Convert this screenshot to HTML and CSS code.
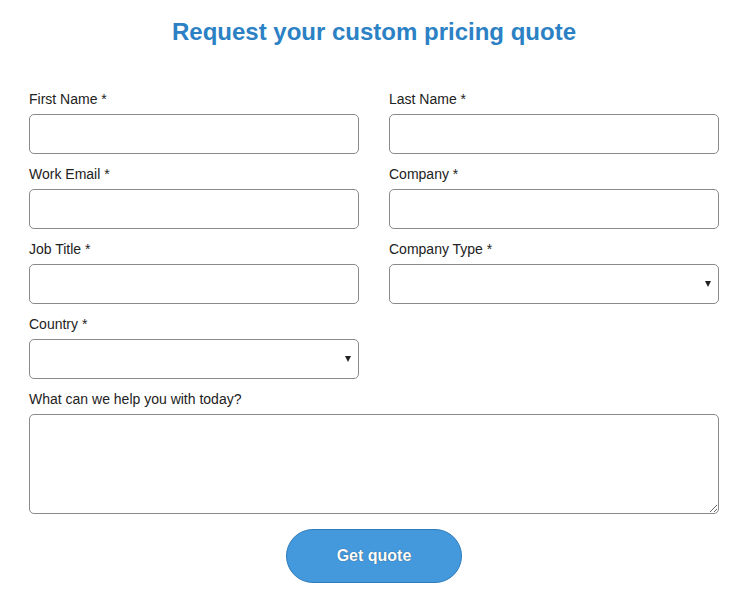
FILE: index.html
```html
<!DOCTYPE html>
<html lang="en">
<head>
<meta charset="utf-8">
<title>Request your custom pricing quote</title>
<link rel="stylesheet" href="styles.css">
</head>
<body>
<form class="quote">
  <h1 class="title">Request your custom pricing quote</h1>
  <div class="grid">
    <div class="field">
      <label class="label">First Name *</label>
      <input class="control" type="text">
    </div>
    <div class="field">
      <label class="label">Last Name *</label>
      <input class="control" type="text">
    </div>
    <div class="field">
      <label class="label">Work Email *</label>
      <input class="control" type="email">
    </div>
    <div class="field">
      <label class="label">Company *</label>
      <input class="control" type="text">
    </div>
    <div class="field">
      <label class="label">Job Title *</label>
      <input class="control" type="text">
    </div>
    <div class="field">
      <label class="label">Company Type *</label>
      <div class="select-wrap">
        <select class="control select"><option></option></select>
        <span class="arrow"></span>
      </div>
    </div>
    <div class="field">
      <label class="label">Country *</label>
      <div class="select-wrap">
        <select class="control select"><option></option></select>
        <span class="arrow"></span>
      </div>
    </div>
    <div class="field wide">
      <label class="label">What can we help you with today?</label>
      <textarea class="control area"></textarea>
    </div>
  </div>
  <div class="actions">
    <button class="submit" type="button">Get quote</button>
  </div>
</form>
</body>
</html>
```
FILE: styles.css
```css
html, body {
  margin: 0;
  padding: 0;
  background: #ffffff;
}
body {
  font-family: "Liberation Sans", Arial, sans-serif;
  color: #222222;
}
.quote {
  width: 690px;
  margin: 0 0 0 29px;
}
.title {
  margin: 18px 0 0;
  font-size: 24px;
  line-height: 28px;
  font-weight: bold;
  color: #2b81c4;
  text-align: center;
}
.grid {
  margin-top: 44px;
  display: grid;
  grid-template-columns: 330px 330px;
  column-gap: 30px;
  row-gap: 11px;
}
.field {
  display: flex;
  flex-direction: column;
}
.wide {
  grid-column: 1 / 3;
}
.label {
  font-size: 14px;
  line-height: 16px;
  color: #222222;
  padding-top: 1px;
  margin-bottom: 7px;
}
.control {
  box-sizing: border-box;
  width: 100%;
  height: 40px;
  margin: 0;
  border: 1px solid #8a8a8a;
  border-radius: 5px;
  background: #ffffff;
  font-family: "Liberation Sans", Arial, sans-serif;
  font-size: 14px;
  padding: 0 10px;
  outline: none;
}
.select-wrap {
  position: relative;
}
.select {
  -webkit-appearance: none;
  appearance: none;
  display: block;
}
.arrow {
  position: absolute;
  right: 8px;
  top: 17px;
  width: 0;
  height: 0;
  border-left: 3px solid transparent;
  border-right: 3px solid transparent;
  border-top: 6px solid #222222;
  pointer-events: none;
}
.area {
  height: 100px;
  padding: 8px 10px;
  resize: both;
  display: block;
}
.actions {
  display: flex;
  justify-content: center;
  margin-top: 15px;
}
.submit {
  box-sizing: border-box;
  width: 176px;
  height: 54px;
  border: 1px solid #2f7bb9;
  border-radius: 27px;
  background: #4499dd;
  color: #ffffff;
  font-family: "Liberation Sans", Arial, sans-serif;
  font-size: 16px;
  font-weight: bold;
  text-shadow: 0 0 1px rgba(0, 0, 0, 0.6);
  cursor: pointer;
  padding: 0;
}
```
